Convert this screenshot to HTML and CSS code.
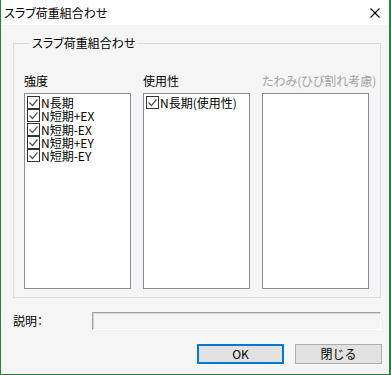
FILE: index.html
```html
<!DOCTYPE html>
<html lang="ja">
<head>
    <meta charset="UTF-8">
    <title>スラブ荷重組合わせ</title>
    <link rel="stylesheet" href="styles.css">
</head>
<body>
    <div class="window">
        <div class="titlebar">
            <span class="title">スラブ荷重組合わせ</span>
            <span class="close">
                <svg width="10" height="10" viewBox="0 0 10 10"><path d="M0.5 0.5L9.5 9.5M9.5 0.5L0.5 9.5" stroke="#000" stroke-width="1.1"/></svg>
            </span>
        </div>
        <div class="content">
            <fieldset class="group">
                <legend>スラブ荷重組合わせ</legend>
                <div class="columns">
                    <div class="column">
                        <div class="col-label">強度</div>
                        <div class="list">
                            <div class="item"><span class="check"></span><span class="item-text">N長期</span></div>
                            <div class="item"><span class="check"></span><span class="item-text">N短期+EX</span></div>
                            <div class="item"><span class="check"></span><span class="item-text">N短期-EX</span></div>
                            <div class="item"><span class="check"></span><span class="item-text">N短期+EY</span></div>
                            <div class="item"><span class="check"></span><span class="item-text">N短期-EY</span></div>
                        </div>
                    </div>
                    <div class="column">
                        <div class="col-label">使用性</div>
                        <div class="list">
                            <div class="item"><span class="check"></span><span class="item-text">N長期(使用性)</span></div>
                        </div>
                    </div>
                    <div class="column">
                        <div class="col-label disabled">たわみ(ひび割れ考慮)</div>
                        <div class="list"></div>
                    </div>
                </div>
            </fieldset>
            <div class="desc-row">
                <span class="desc-label">説明：</span>
                <div class="desc-input"></div>
            </div>
            <div class="buttons">
                <button class="button default">OK</button>
                <button class="button">閉じる</button>
            </div>
        </div>
    </div>
</body>
</html>
```

FILE: styles.css
```css
html, body {
    margin: 0;
    padding: 0;
}
body {
    background: #2f7d3a; /* desktop showing round the dialog */
    width: 391px;
    height: 375px;
    font-family: "Noto Sans CJK JP", sans-serif;
    font-size: 12px;
    font-feature-settings: "palt";
    color: #000;
}
.window {
    margin-left: 1px;
    width: 388px;
    height: 374px;
    background: #f5f5f5;
    display: flex;
    flex-direction: column;
}
.titlebar {
    height: 25px;
    background: #fff;
    display: flex;
    align-items: center;
    justify-content: space-between;
}
.title {
    padding-left: 3px;
    font-size: 12px;
    line-height: 16px;
}
.close {
    width: 10px;
    height: 10px;
    margin-right: 9px;
    margin-top: 1px;
    display: flex;
}
.content {
    display: flex;
    flex-direction: column;
    padding: 10px 0 9px 0;
}
.group {
    margin: 0 0 0 12px;
    width: 368px;
    box-sizing: border-box;
    border: 1px solid #dcdcdc;
    padding: 22px 0 8px 10px;
}
.group legend {
    padding: 0 2px;
    margin-left: 6px;
    line-height: 16px;
}
.columns {
    display: flex;
    gap: 12px;
}
.column {
    width: 107px;
    display: flex;
    flex-direction: column;
}
.col-label {
    line-height: 16px;
    height: 16px;
    margin-bottom: 4px;
    white-space: nowrap;
}
.col-label.disabled {
    color: #a3a3a3;
}
.list {
    height: 196px;
    box-sizing: border-box;
    border: 1px solid #8c8c99;
    background: #fff;
    padding: 2px 0 0 2px;
}
.item {
    display: flex;
    align-items: center;
    height: 13.3px;
    white-space: nowrap;
}
.item-text {
    line-height: 13px;
}
.check {
    width: 13px;
    height: 13px;
    box-sizing: border-box;
    border: 1px solid #333;
    background: #fff url("data:image/svg+xml,%3Csvg xmlns='http://www.w3.org/2000/svg' width='11' height='11'%3E%3Cpath d='M1.5 5.5L4.5 8.5L9.5 2.5' fill='none' stroke='%23555' stroke-width='1.2'/%3E%3C/svg%3E") no-repeat center;
    margin-right: 1px;
    flex: none;
}
.desc-row {
    display: flex;
    align-items: center;
    margin: 14px 8px 0 12px;
}
.desc-label {
    width: 79px;
    line-height: 16px;
}
.desc-input {
    flex: 1;
    height: 18px;
    box-sizing: border-box;
    border-top: 1px solid #a0a0a0;
    border-left: 1px solid #a0a0a0;
    border-right: 1px solid #fff;
    border-bottom: 1px solid #fff;
    box-shadow: inset 1px 1px 0 #d4d4d4;
}
.buttons {
    display: flex;
    justify-content: flex-end;
    gap: 11px;
    margin: 14px 7px 0 0;
}
.button {
    width: 87px;
    height: 20px;
    box-sizing: border-box;
    background: #e1e1e1;
    border: 1px solid #adadad;
    font-family: "Noto Sans CJK JP", sans-serif;
    font-size: 12px;
    line-height: 16px;
    padding: 0;
    color: #000;
}
.button.default {
    border: 2px solid #0078d7;
}
```
